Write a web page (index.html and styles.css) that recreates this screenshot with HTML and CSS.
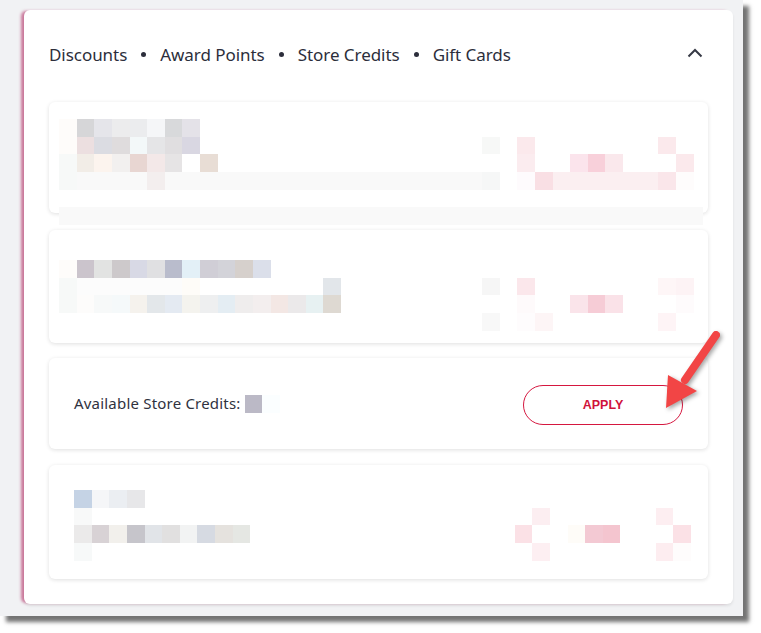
FILE: index.html
```html
<!DOCTYPE html>
<html lang="en">
<head>
<meta charset="utf-8">
<title>Discounts</title>
<link rel="stylesheet" href="styles.css">
</head>
<body>
<div class="frame">
  <div class="panel">
    <div class="head">
      <div class="tabs">
        <span>Discounts</span><span class="dot"></span><span>Award Points</span><span class="dot"></span><span>Store Credits</span><span class="dot"></span><span>Gift Cards</span>
      </div>
      <svg class="chev" width="16" height="10" viewBox="0 0 16 10"><path d="M1.5 8.5 L8 2 L14.5 8.5" fill="none" stroke="#363945" stroke-width="2"/></svg>
    </div>
    <div class="list">
      <div class="item item-a">
        <div class="mosaic m36">
          <i style="grid-area:1/1;background:#fefcfa"></i><i style="grid-area:1/2;background:#d6d6d8"></i><i style="grid-area:1/3;background:#e5e5ea"></i><i style="grid-area:1/4;background:#ececed"></i><i style="grid-area:1/5;background:#ebecee"></i><i style="grid-area:1/6;background:#f5f6f8"></i><i style="grid-area:1/7;background:#d8d9db"></i><i style="grid-area:1/8;background:#e4e2e8"></i>
          <i style="grid-area:2/1;background:#fefcfa"></i><i style="grid-area:2/2;background:#ecdfe0"></i><i style="grid-area:2/3;background:#dbdce2"></i><i style="grid-area:2/4;background:#dfdcdd"></i><i style="grid-area:2/5;background:#f3f8f9"></i><i style="grid-area:2/6;background:#e5e5e7"></i><i style="grid-area:2/7;background:#e0dee0"></i><i style="grid-area:2/8;background:#d9d7e2"></i><i style="grid-area:2/25;background:#f7f8f7"></i><i style="grid-area:2/27;background:#fbe9ec"></i><i style="grid-area:2/35;background:#fbe9ec"></i>
          <i style="grid-area:3/1;background:#f7f9f8"></i><i style="grid-area:3/2;background:#f2ede7"></i><i style="grid-area:3/3;background:#fcf4ee"></i><i style="grid-area:3/4;background:#f2f0ef"></i><i style="grid-area:3/5;background:#e8d6d2"></i><i style="grid-area:3/6;background:#f3e8e8"></i><i style="grid-area:3/7;background:#e6e4e5"></i><i style="grid-area:3/9;background:#e8ddd5"></i><i style="grid-area:3/27;background:#fbecef"></i><i style="grid-area:3/30;background:#fbe4ec"></i><i style="grid-area:3/31;background:#f8d0da"></i><i style="grid-area:3/32;background:#fae8ec"></i><i style="grid-area:3/36;background:#fbe9ec"></i>
          <i style="grid-area:4/1;background:#f7f9f8"></i><i style="grid-area:4/2/auto/span 4;background:#f9f9f9"></i><i style="grid-area:4/6;background:#f3eeee"></i><i style="grid-area:4/7/auto/span 18;background:#f9f9f9"></i><i style="grid-area:4/25;background:#f6f7f7"></i><i style="grid-area:4/27;background:#fefbfd"></i><i style="grid-area:4/28;background:#f9dfe4"></i><i style="grid-area:4/29/auto/span 6;background:#fbeff1"></i><i style="grid-area:4/35;background:#fae6ea"></i><i style="grid-area:4/36;background:#fefcfc"></i>
        </div>
      </div>
      <div class="strip"></div>
      <div class="item item-b">
        <div class="mosaic m36">
          <i style="grid-area:1/1;background:#fefcfa"></i><i style="grid-area:1/2;background:#cbc4cc"></i><i style="grid-area:1/3;background:#e2e3e2"></i><i style="grid-area:1/4;background:#cdc9cb"></i><i style="grid-area:1/5;background:#d8d9e5"></i><i style="grid-area:1/6;background:#e0e0e2"></i><i style="grid-area:1/7;background:#b9bccc"></i><i style="grid-area:1/8;background:#e3f0f7"></i><i style="grid-area:1/9;background:#d0ced6"></i><i style="grid-area:1/10;background:#d3d3d9"></i><i style="grid-area:1/11;background:#d6d0cc"></i><i style="grid-area:1/12;background:#dbdfea"></i>
          <i style="grid-area:2/1;background:#f7f9f8"></i><i style="grid-area:2/2/auto/span 6;background:#fcfcfc"></i><i style="grid-area:2/8;background:#fefcf8"></i><i style="grid-area:2/16;background:#e2e6ea"></i><i style="grid-area:2/25;background:#f6f6f6"></i><i style="grid-area:2/27;background:#fbe7eb"></i><i style="grid-area:2/35;background:#fef6f7"></i><i style="grid-area:2/36;background:#fdf3f5"></i>
          <i style="grid-area:3/1;background:#f7f9f8"></i><i style="grid-area:3/2;background:#fdfcfb"></i><i style="grid-area:3/3;background:#f7f9f9"></i><i style="grid-area:3/4;background:#f5f9fa"></i><i style="grid-area:3/5;background:#f5f2ed"></i><i style="grid-area:3/6;background:#e3e7ea"></i><i style="grid-area:3/7;background:#e4eaf2"></i><i style="grid-area:3/8;background:#f4f3ee"></i><i style="grid-area:3/9;background:#eeeff0"></i><i style="grid-area:3/10;background:#e4edf3"></i><i style="grid-area:3/11;background:#efeded"></i><i style="grid-area:3/12;background:#f3eeee"></i><i style="grid-area:3/13;background:#f3e7e4"></i><i style="grid-area:3/14;background:#ebe9ea"></i><i style="grid-area:3/15;background:#e7f1f2"></i><i style="grid-area:3/16;background:#ded9d2"></i><i style="grid-area:3/27;background:#fefafb"></i><i style="grid-area:3/30;background:#fae4ea"></i><i style="grid-area:3/31;background:#f6ccd6"></i><i style="grid-area:3/32;background:#fae2e8"></i><i style="grid-area:3/36;background:#fefbfc"></i>
          <i style="grid-area:4/25;background:#f8f8f8"></i><i style="grid-area:4/27;background:#fefcfd"></i><i style="grid-area:4/28;background:#fdf5f6"></i><i style="grid-area:4/35;background:#fef4f6"></i>
        </div>
      </div>
      <div class="item credit">
        <div class="credit-label">Available Store Credits:<i class="val val-1"></i><i class="val val-2"></i></div>
        <button class="apply" type="button">APPLY</button>
      </div>
      <div class="item item-d">
        <div class="mosaic m35">
          <i style="grid-area:1/1;background:#c5d3e5"></i><i style="grid-area:1/2;background:#f5f6f8"></i><i style="grid-area:1/3;background:#ebeef2"></i><i style="grid-area:1/4;background:#e7e7e9"></i>
          <i style="grid-area:2/1;background:#f8f9f9"></i><i style="grid-area:2/27;background:#fceef1"></i><i style="grid-area:2/34;background:#fdeef1"></i>
          <i style="grid-area:3/1;background:#ebeaea"></i><i style="grid-area:3/2;background:#d8d2d5"></i><i style="grid-area:3/3;background:#f2f0ec"></i><i style="grid-area:3/4;background:#c6c5cb"></i><i style="grid-area:3/5;background:#e1e4e8"></i><i style="grid-area:3/6;background:#e1e0e0"></i><i style="grid-area:3/7;background:#f2f3f3"></i><i style="grid-area:3/8;background:#d6dae2"></i><i style="grid-area:3/9;background:#e5e2de"></i><i style="grid-area:3/10;background:#e5e7e3"></i><i style="grid-area:3/26;background:#fbe1e6"></i><i style="grid-area:3/29;background:#fefcf8"></i><i style="grid-area:3/30;background:#f3c9d3"></i><i style="grid-area:3/31;background:#f4c5cf"></i><i style="grid-area:3/35;background:#fbe1e6"></i>
          <i style="grid-area:4/1;background:#f7f9f9"></i><i style="grid-area:4/27;background:#fdeff2"></i><i style="grid-area:4/34;background:#fdedf0"></i><i style="grid-area:4/35;background:#fefcfc"></i>
        </div>
      </div>
    </div>
  </div>
  <svg class="arrow" width="80" height="100" viewBox="0 0 80 100">
    <line x1="56" y1="5" x2="25" y2="50" stroke="#f24545" stroke-width="8" stroke-linecap="round"/>
    <polygon points="6,78 8,45 37,61" fill="#f24545"/>
  </svg>
</div>
</body>
</html>
```
FILE: styles.css
```css
* { box-sizing: border-box; }
html, body { margin: 0; padding: 0; background: #ffffff; }
body { width: 761px; height: 633px; overflow: hidden; font-family: "Noto Sans", "Open Sans", sans-serif; }

.frame {
  position: relative;
  width: 743px;
  height: 616px;
  background: #f1f2f4;
  padding: 10px 0 0 24px;
  box-shadow: 6px 6px 4px rgba(0, 0, 0, 0.55);
}

.panel {
  width: 709px;
  height: 594px;
  background: #ffffff;
  border-radius: 6px;
  padding: 0 25px;
  box-shadow: -4px 0 3px -1px rgba(190, 80, 125, 0.75), 0 2px 3px rgba(0, 0, 0, 0.08);
}

.head {
  height: 92px;
  display: flex;
  align-items: center;
  justify-content: space-between;
  padding-right: 5px;
  padding-bottom: 4px;
}

.tabs {
  display: flex;
  align-items: center;
  gap: 14px;
  font-size: 17px;
  color: #2c2e3b;
  letter-spacing: -0.05px;
}

.dot {
  display: block;
  width: 5px;
  height: 5px;
  border-radius: 50%;
  background: #2c2e3b;
  margin-top: 1px;
}

.chev { display: block; margin-top: -3px; }

.list { display: flex; flex-direction: column; }

.item {
  background: #ffffff;
  border-radius: 6px;
  box-shadow: 0 1px 4px rgba(0, 0, 0, 0.13);
}

.mosaic {
  display: grid;
  grid-auto-rows: 17.64px;
}
.m36 { grid-template-columns: repeat(36, 17.64px); }
.m35 { grid-template-columns: repeat(35, 17.64px); }
.mosaic i { display: block; }

.item-a { padding: 17px 10px 23px; height: 111px; }

.strip {
  position: relative;
  height: 18px;
  margin: -6px 5px 0 10px;
  background: #f9f9f9;
}

.item-b { margin-top: 5px; padding: 30px 10px 12px; height: 113px; }

.credit {
  margin-top: 15px;
  height: 91px;
  display: flex;
  align-items: center;
  justify-content: space-between;
  padding: 0 25px;
}

.credit-label {
  display: flex;
  align-items: center;
  font-size: 15px;
  letter-spacing: 0.2px;
  color: #2f3240;
  margin-top: -1px;
}

.val { display: block; width: 17.6px; height: 18px; margin-top: 2px; }
.val-1 { margin-left: 4px; background: #bbb9c6; }
.val-2 { background: #fbfeff; }

.apply {
  width: 160px;
  height: 40px;
  border: 1px solid #d5173f;
  border-radius: 20px;
  background: #ffffff;
  color: #d0123b;
  font-family: "Liberation Sans", Arial, sans-serif;
  font-weight: bold;
  font-size: 12.5px;
  margin-top: 2px;
}

.item-d { margin-top: 16px; padding: 25px 10px 18px 25px; height: 114px; }

.arrow {
  position: absolute;
  left: 660px;
  top: 330px;
  overflow: visible;
  filter: drop-shadow(2px 2px 2px rgba(0, 0, 0, 0.35));
}
```
